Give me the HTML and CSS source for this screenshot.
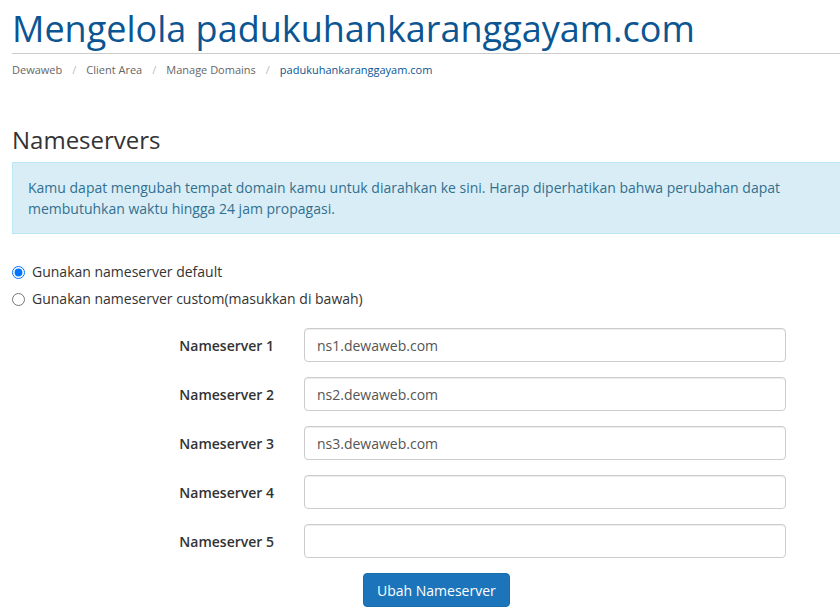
FILE: index.html
```html
<!DOCTYPE html>
<html lang="id">
<head>
<meta charset="utf-8">
<title>Mengelola padukuhankaranggayam.com</title>
<link rel="stylesheet" href="styles.css">
</head>
<body>
<div class="page">
  <div class="header">
    <h1 class="title">Mengelola padukuhankaranggayam.com</h1>
  </div>
  <ol class="breadcrumb">
    <li><a href="#">Dewaweb</a></li>
    <li class="sep">/</li>
    <li><a href="#">Client Area</a></li>
    <li class="sep">/</li>
    <li><a href="#">Manage Domains</a></li>
    <li class="sep">/</li>
    <li class="active">padukuhankaranggayam.com</li>
  </ol>

  <h2 class="section-title">Nameservers</h2>

  <div class="alert">Kamu dapat mengubah tempat domain kamu untuk diarahkan ke sini. Harap diperhatikan bahwa perubahan dapat membutuhkan waktu hingga 24 jam propagasi.</div>

  <div class="radios">
    <label class="radio"><input type="radio" name="ns" checked> Gunakan nameserver default</label>
    <label class="radio"><input type="radio" name="ns"> Gunakan nameserver custom(masukkan di bawah)</label>
  </div>

  <form class="ns-form">
    <div class="row"><label class="lbl">Nameserver 1</label><input class="field" type="text" value="ns1.dewaweb.com"></div>
    <div class="row"><label class="lbl">Nameserver 2</label><input class="field" type="text" value="ns2.dewaweb.com"></div>
    <div class="row"><label class="lbl">Nameserver 3</label><input class="field" type="text" value="ns3.dewaweb.com"></div>
    <div class="row"><label class="lbl">Nameserver 4</label><input class="field" type="text" value=""></div>
    <div class="row"><label class="lbl">Nameserver 5</label><input class="field" type="text" value=""></div>
    <div class="actions"><button type="button" class="btn">Ubah Nameserver</button></div>
  </form>
</div>
</body>
</html>
```

FILE: styles.css
```css
html, body {
  margin: 0;
  padding: 0;
  background: #fff;
  overflow: hidden;
}
body {
  font-family: "Open Sans", "Noto Sans", sans-serif;
  font-size: 14px;
  color: #333;
}
.page {
  width: 900px;
  padding-left: 12px;
}
.header {
  border-bottom: 1px solid #ccc;
  padding-top: 4px;
}
.title {
  margin: 0;
  font-size: 36px;
  font-weight: 400;
  line-height: 49px;
  color: #0a5592;
}
.breadcrumb {
  list-style: none;
  margin: 0;
  padding: 8px 0 0;
  display: flex;
  gap: 10px;
  font-size: 11px;
  line-height: 16px;
}
.breadcrumb a {
  color: #666;
  text-decoration: none;
}
.breadcrumb .sep {
  color: #bbb;
}
.breadcrumb .active {
  color: #0a5592;
}
.section-title {
  margin: 47px 0 0;
  font-size: 24px;
  font-weight: 400;
  line-height: 30px;
  color: #333;
}
.alert {
  margin-top: 7px;
  background: #d9edf7;
  border: 1px solid #bce8f1;
  color: #31708f;
  padding: 14px 75px 14px 15px;
  line-height: 21px;
}
.radios {
  margin-top: 28px;
  display: flex;
  flex-direction: column;
  gap: 7px;
}
.radio {
  display: flex;
  align-items: center;
  gap: 7px;
  line-height: 20px;
}
.radio input {
  margin: 0;
  width: 13px;
  height: 13px;
}
.ns-form {
  margin-top: 19px;
  width: 804px;
  display: flex;
  flex-direction: column;
  gap: 15px;
}
.row {
  display: flex;
  align-items: center;
}
.lbl {
  width: 292px;
  text-align: right;
  font-weight: 600;
  padding-right: 30px;
  box-sizing: border-box;
}
.field {
  width: 482px;
  height: 34px;
  box-sizing: border-box;
  border: 1px solid #ccc;
  border-radius: 4px;
  padding: 0 12px;
  font-family: "Open Sans", "Noto Sans", sans-serif;
  font-size: 14px;
  color: #555;
  box-shadow: inset 0 1px 1px rgba(0,0,0,.075);
}
.actions {
  padding-left: 351px;
}
.btn {
  height: 34px;
  padding: 0 13px;
  background: #1c75bb;
  border: 1px solid #1a6dad;
  border-radius: 4px;
  color: #fff;
  font-family: "Open Sans", "Noto Sans", sans-serif;
  font-size: 14px;
}
```
